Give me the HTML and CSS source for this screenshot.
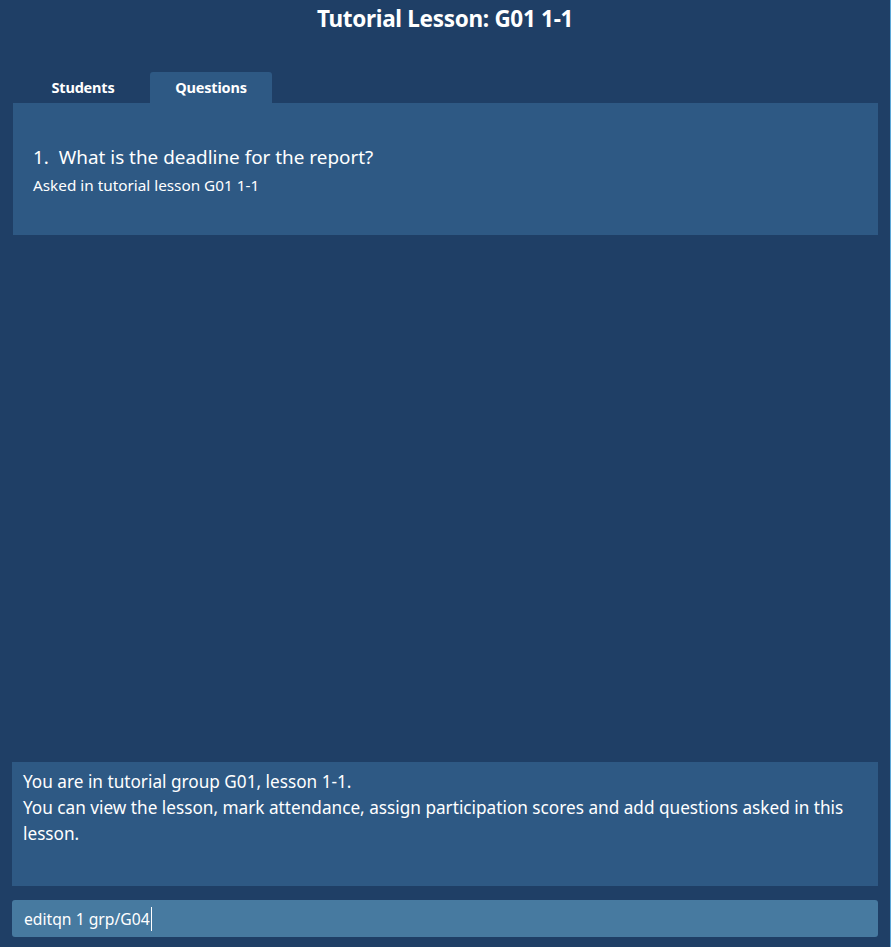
FILE: index.html
```html
<!DOCTYPE html>
<html>
<head>
<meta charset="utf-8">
<link rel="stylesheet" href="styles.css">
</head>
<body>
<div class="app">
  <h1 class="title">Tutorial Lesson: G01 1-1</h1>
  <div class="tabs">
    <div class="tab">Students</div>
    <div class="tab active">Questions</div>
  </div>
  <div class="tab-content">
    <div class="card">
      <div class="q-title">1.&nbsp; What is the deadline for the report?</div>
      <div class="q-sub">Asked in tutorial lesson G01 1-1</div>
    </div>
  </div>
  <div class="result">You are in tutorial group G01, lesson 1-1.<br>You can view the lesson, mark attendance, assign participation scores and add questions asked in this lesson.</div>
  <div class="command"><span class="cmd-text">editqn 1 grp/G04</span><span class="caret"></span></div>
</div>
</body>
</html>
```
FILE: styles.css
```css
html, body {
  margin: 0;
  padding: 0;
  background: #1f3f66;
}
body {
  font-family: "Noto Sans", "Open Sans", sans-serif;
  color: #ffffff;
}
.app {
  height: 947px;
  display: flex;
  flex-direction: column;
  box-sizing: border-box;
  border-right: 1px solid #5fa8d8;
}
.title {
  margin: 0;
  padding-top: 4px;
  height: 36px;
  font-size: 22.5px;
  font-weight: bold;
  text-align: center;
  line-height: 30px;
  letter-spacing: -0.3px;
}
.tabs {
  margin-top: 32px;
  display: flex;
  padding-left: 22px;
  gap: 6px;
  height: 31px;
}
.tab {
  width: 122px;
  font-size: 14.5px;
  font-weight: bold;
  text-align: center;
  line-height: 31px;
  border-radius: 3px 3px 0 0;
  letter-spacing: -0.2px;
}
.tab.active {
  background: #2e5984;
}
.tab-content {
  flex: 1;
  margin: 0 12px 0 13px;
}
.card {
  background: #2e5984;
  height: 132px;
  box-sizing: border-box;
  padding: 41px 20px 0 20px;
}
.q-title {
  font-size: 18.9px;
  line-height: 26px;
}
.q-sub {
  font-size: 15.3px;
  line-height: 20px;
  margin-top: 5px;
}
.result {
  margin: 0 12px 0 12px;
  height: 124px;
  box-sizing: border-box;
  background: #2e5984;
  padding: 7px 11px 5px 11px;
  font-size: 17.2px;
  line-height: 26px;
}
.command {
  margin: 14px 12px 10px 12px;
  height: 37px;
  border-radius: 3px;
  background: #477aa0;
  display: flex;
  align-items: center;
  padding-left: 12px;
  font-size: 15.7px;
}
.caret {
  display: inline-block;
  width: 1px;
  height: 24px;
  background: #ffffff;
  margin-left: 1px;
}
```
